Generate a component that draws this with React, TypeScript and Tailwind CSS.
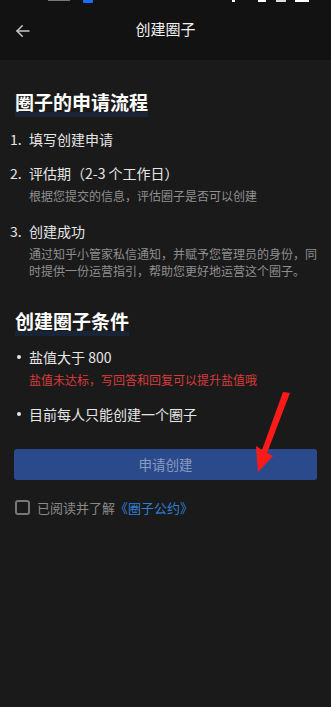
import React from 'react';

const font = { fontFamily: '"Noto Sans CJK SC", "Noto Sans", sans-serif' };

const BackArrow: React.FC = () => (
    <svg width="18" height="18" viewBox="0 0 24 24" fill="none" stroke="#c8c8c8" strokeWidth="2" strokeLinecap="round" strokeLinejoin="round">
        <path d="M20 12H4" />
        <path d="M11 5l-7 7 7 7" />
    </svg>
);

const Heading: React.FC<{ children: React.ReactNode }> = ({ children }) => (
    <h2 className="relative inline-block text-[19px] font-bold leading-[26px] text-white">
        <span className="absolute left-0 right-0 bottom-[-2px] h-[5px] bg-[#1b2a44] opacity-70" />
        <span className="relative">{children}</span>
    </h2>
);

const Step: React.FC<{ num: string; title: string; desc?: string }> = ({ num, title, desc }) => (
    <div className="flex">
        <span className="w-[19px] text-[14px] leading-[22px] text-[#e6e6e6]">{num}.</span>
        <div className="flex-1">
            <div className="text-[14px] leading-[22px] text-[#e6e6e6]">{title}</div>
            {desc && <div className="mt-[3px] mb-[4px] text-[12px] leading-[17px] text-[#8f8f8f]">{desc}</div>}
        </div>
    </div>
);

export default function App() {
    return (
        <div className="relative h-[707px] w-[331px] overflow-hidden bg-[#1a1a1a]" style={font}>
            {/* status bar + nav */}
            <header className="h-[60px] bg-[#121212]">
                <div className="relative h-[4px]">
                    <span className="absolute left-[48px] top-0 h-[1px] w-[22px] bg-[#777]" />
                    <span className="absolute left-[83px] top-0 h-[3px] w-[10px] rounded-b-[1px] bg-[#1e6bff]" />
                    <span className="absolute left-[232px] top-0 h-[2px] w-[3px] bg-white" />
                    <span className="absolute left-[258px] top-0 h-[2px] w-[8px] bg-white" />
                    <span className="absolute left-[276px] top-0 h-[2px] w-[10px] bg-[#ddd]" />
                    <span className="absolute left-[295px] top-0 h-[2px] w-[14px] bg-white" />
                </div>
                <div className="relative flex h-[56px] items-center justify-center">
                    <span className="absolute left-[14px] top-[18px]"><BackArrow /></span>
                    <span className="pb-[6px] text-[15px] text-[#f0f0f0]">创建圈子</span>
                </div>
            </header>

            <main className="px-[10px] pt-[29px]">
                <div className="pl-[5px]"><Heading>圈子的申请流程</Heading></div>

                <div className="mt-[13px] flex flex-col gap-[12px]">
                    <Step num="1" title="填写创建申请" />
                    <Step num="2" title="评估期（2-3 个工作日）" desc="根据您提交的信息，评估圈子是否可以创建" />
                    <Step num="3" title="创建成功" desc="通过知乎小管家私信通知，并赋予您管理员的身份，同时提供一份运营指引，帮助您更好地运营这个圈子。" />
                </div>

                <div className="mt-[25px] pl-[5px]"><Heading>创建圈子条件</Heading></div>

                <div className="mt-[12px] flex flex-col gap-[14px] pl-[7px]">
                    <div className="flex">
                        <span className="mt-[9px] h-[4px] w-[4px] rounded-full bg-[#e6e6e6]" />
                        <div className="ml-[8px]">
                            <div className="text-[14px] leading-[22px] text-[#e6e6e6]">盐值大于 800</div>
                            <div className="mt-[3px] text-[12px] leading-[18px] text-[#d83a3a]">盐值未达标，写回答和回复可以提升盐值哦</div>
                        </div>
                    </div>
                    <div className="flex">
                        <span className="mt-[9px] h-[4px] w-[4px] rounded-full bg-[#e6e6e6]" />
                        <div className="ml-[8px] text-[14px] leading-[22px] text-[#e6e6e6]">目前每人只能创建一个圈子</div>
                    </div>
                </div>

                <button className="mt-[24px] ml-[4px] flex h-[31px] w-[303px] items-center justify-center rounded-[3px] bg-[#2a4a8c] text-[13.5px] text-[#8a9bbe]">
                    申请创建
                </button>

                <div className="mt-[18px] ml-[5px] flex items-center">
                    <span className="h-[15px] w-[15px] rounded-[3px] border-2 border-[#777]" />
                    <span className="ml-[7px] text-[13px] text-[#8a8a8a]">已阅读并了解</span>
                    <span className="text-[13px] text-[#2e7fd6]">《圈子公约》</span>
                </div>
            </main>

            {/* annotation arrow */}
            <svg className="pointer-events-none absolute left-0 top-0" width="331" height="707">
                <path d="M290 393 L283 392 L262 450 L256 446 L258 472 L273 456 L267 453 Z" fill="#ff1a1a" />
            </svg>
        </div>
    );
}
